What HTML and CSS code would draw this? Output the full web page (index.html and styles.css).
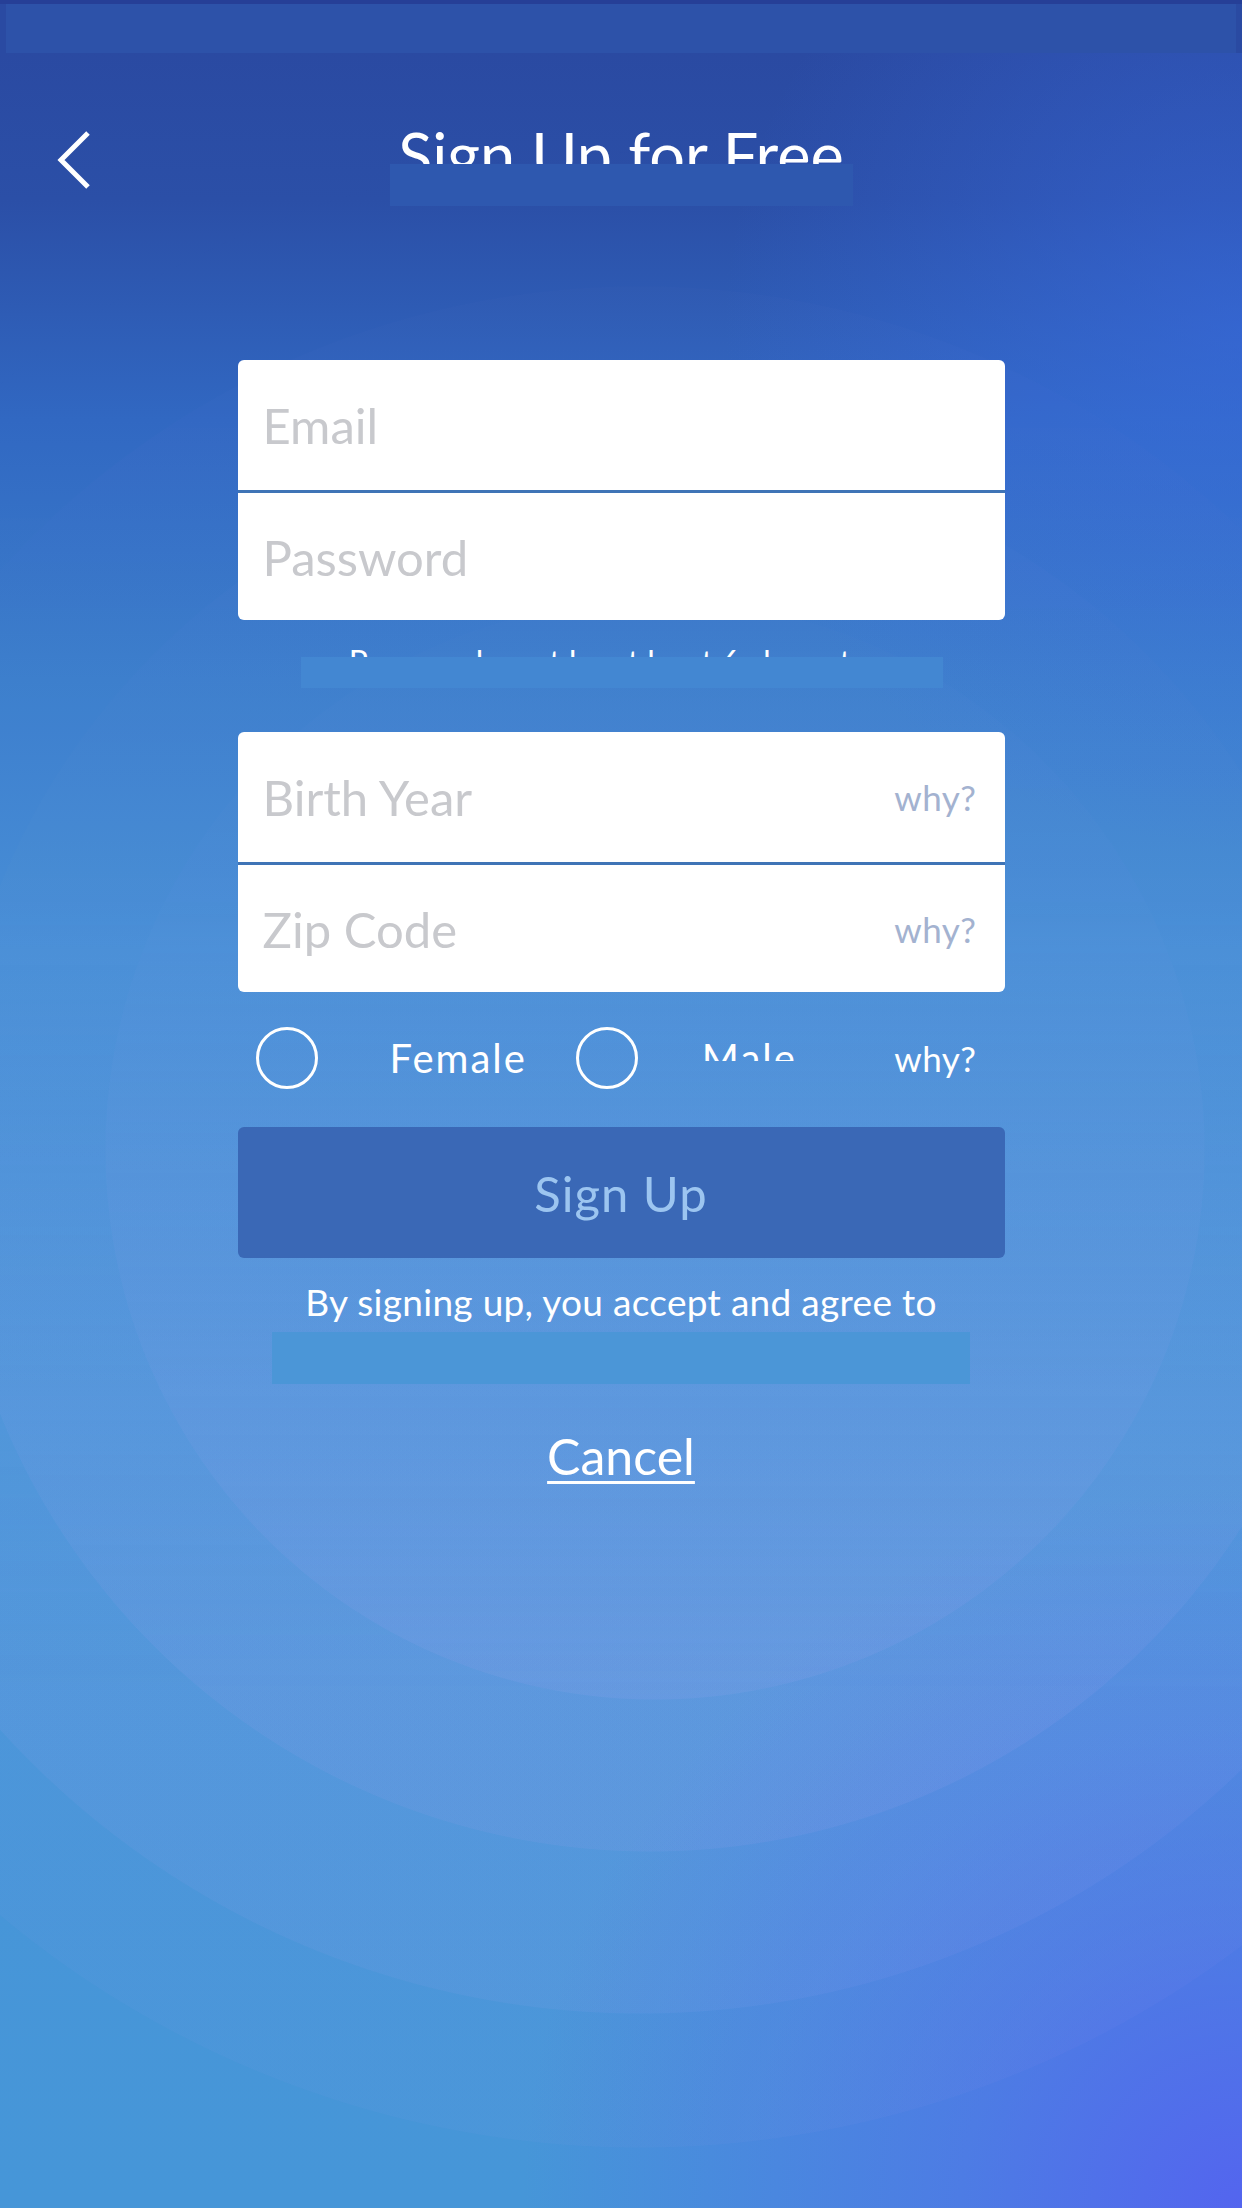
FILE: index.html
```html
<!DOCTYPE html>
<html lang="en">
<head>
<meta charset="utf-8">
<title>Sign Up for Free</title>
<link rel="stylesheet" href="styles.css">
</head>
<body>
<div class="screen">
  <div class="statusbar"><div class="statusbar-band"></div></div>

  <header class="nav">
    <button class="back" aria-label="Back">
      <svg width="40" height="60" viewBox="0 0 40 60"><path d="M33 3 L6 30 L33 57" fill="none" stroke="#fff" stroke-width="5"/></svg>
    </button>
    <h1 class="title">Sign Up for Free</h1>
    <div class="mask mask-title"></div>
  </header>

  <main class="form">
    <div class="card">
      <div class="field"><span class="placeholder">Email</span></div>
      <div class="field"><span class="placeholder">Password</span></div>
    </div>

    <div class="hint">
      <p class="hint-text">Password must be at least 6 characters</p>
      <div class="mask mask-hint"></div>
    </div>

    <div class="card">
      <div class="field"><span class="placeholder">Birth Year</span><span class="why">why?</span></div>
      <div class="field"><span class="placeholder">Zip Code</span><span class="why">why?</span></div>
    </div>

    <div class="gender">
      <span class="radio"></span>
      <span class="gender-label female">Female</span>
      <span class="radio"></span>
      <span class="gender-label male">Male</span>
      <span class="why why-light">why?</span>
    </div>

    <button class="signup">Sign Up</button>

    <p class="terms">By signing up, you accept and agree to</p>
    <div class="terms-mask"></div>

    <a class="cancel" href="#">Cancel</a>
  </main>
</div>
</body>
</html>
```

FILE: styles.css
```css
* { box-sizing: border-box; }

html, body {
  margin: 0;
  padding: 0;
}

body {
  width: 1242px;
  height: 2208px;
  overflow: hidden;
  font-family: "Lato", "Noto Sans", "Liberation Sans", sans-serif;
}

.screen {
  position: relative;
  isolation: isolate;
  width: 1242px;
  height: 2208px;
  background:
    radial-gradient(circle at 1242px 2208px, rgba(84, 98, 240, 0.95) 0, rgba(84, 98, 240, 0.5) 280px, rgba(84, 98, 240, 0) 720px),
    radial-gradient(circle at 1242px 330px, rgba(58, 108, 228, 0.55) 0, rgba(58, 108, 228, 0) 520px),
    linear-gradient(180deg, #2a48a0 0, #2b4fa7 200px, #3168c2 420px, #3b7ecc 680px, #468fd6 950px, #4895d8 1400px, #4696d8 2208px);
}

/* concentric soft rings of the backdrop */
.screen::before {
  content: "";
  position: absolute;
  inset: 0;
  z-index: -1;
  background:
    radial-gradient(circle at 655px 1150px, rgba(175, 165, 245, 0.11) 0 549px, rgba(175, 165, 245, 0) 550px),
    radial-gradient(circle at 650px 1150px, rgba(175, 165, 245, 0.10) 0 701px, rgba(175, 165, 245, 0) 702px),
    radial-gradient(circle at 640px 1150px, rgba(175, 165, 245, 0.08) 0 863px, rgba(175, 165, 245, 0) 864px),
    radial-gradient(circle at 640px 1150px, rgba(175, 165, 245, 0.05) 0 997px, rgba(175, 165, 245, 0) 998px);
  -webkit-mask-image: linear-gradient(180deg, rgba(0,0,0,0.12) 0, rgba(0,0,0,0.2) 900px, rgba(0,0,0,0.6) 1300px, #000 1700px);
  mask-image: linear-gradient(180deg, rgba(0,0,0,0.12) 0, rgba(0,0,0,0.2) 900px, rgba(0,0,0,0.6) 1300px, #000 1700px);
}

/* status bar */
.statusbar {
  height: 53px;
  border-top: 4px solid #263f97;
  background: #2a4aa2;
}
.statusbar-band {
  height: 49px;
  margin: 0 6px;
  background: #2d52a9;
}

/* nav */
.nav {
  position: relative;
  height: 214px;
  display: flex;
  align-items: flex-start;
  justify-content: center;
  padding-top: 64px;
}
.back {
  position: absolute;
  left: 55px;
  top: 77px;
  width: 40px;
  height: 60px;
  padding: 0;
  border: 0;
  background: none;
  display: block;
}
.back svg { display: block; }
.title {
  margin: 0;
  font-size: 63px;
  line-height: 76px;
  font-weight: 400;
  color: #fff;
}
.mask {
  position: absolute;
  display: block;
}
.mask-title {
  left: 390px;
  top: 111px;
  width: 463px;
  height: 42px;
  background: #2e58af;
}

/* form */
.form {
  width: 767px;
  margin: 93px auto 0;
  display: flex;
  flex-direction: column;
}

.card {
  background: #fff;
  border-radius: 6px;
  overflow: hidden;
}
.field {
  height: 130px;
  display: flex;
  align-items: center;
  justify-content: space-between;
  padding: 0 28px 0 25px;
}
.field + .field {
  border-top: 3px solid #3f74b6;
}
.placeholder {
  font-size: 49px;
  color: #c8c9cd;
  font-weight: 400;
}
.why {
  font-size: 35px;
  color: #a3b2d0;
  letter-spacing: 0.5px;
}

/* hint */
.hint {
  position: relative;
  height: 112px;
  padding-top: 22px;
}
.hint-text {
  margin: 0;
  text-align: center;
  font-size: 32px;
  line-height: 40px;
  color: #fff;
}
.mask-hint {
  left: 63px;
  top: 37px;
  width: 642px;
  height: 31px;
  background: #4387d2;
}

/* gender row */
.gender {
  margin-top: 35px;
  height: 62px;
  display: flex;
  align-items: center;
  padding: 0 28px 0 18px;
}
.radio {
  width: 62px;
  height: 62px;
  border: 3px solid #fff;
  border-radius: 50%;
  flex: none;
}
.gender-label {
  font-size: 40px;
  line-height: 48px;
  letter-spacing: 2px;
  color: #fff;
}
.female {
  margin-left: 72px;
  margin-right: 49px;
}
.male {
  align-self: flex-start;
  margin-top: 7px;
  margin-left: 64px;
  height: 27px;
  overflow: hidden;
}
.why-light {
  margin-left: auto;
  color: #fff;
}

/* button */
.signup {
  margin-top: 38px;
  height: 131px;
  border: 0;
  border-radius: 6px;
  background: #3a68b6;
  color: #9cc5f0;
  font-family: inherit;
  font-size: 49px;
  letter-spacing: 1px;
  font-weight: 400;
}

.terms {
  margin: 22px 0 0;
  text-align: center;
  font-size: 37px;
  line-height: 44px;
  letter-spacing: 0.3px;
  color: #fff;
}
.terms-mask {
  width: 698px;
  height: 52px;
  margin: 8px auto 0;
  background: #4b96d7;
}

.cancel {
  margin-top: 42px;
  align-self: center;
  font-size: 50px;
  line-height: 60px;
  color: #fff;
  text-decoration: underline;
  text-decoration-thickness: 3px;
  text-underline-offset: 6px;
}
```
